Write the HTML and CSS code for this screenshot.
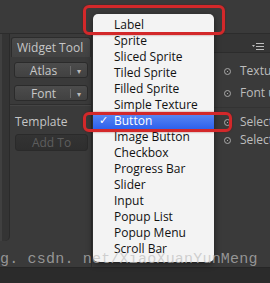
FILE: index.html
```html
<!DOCTYPE html>
<html lang="en">

<head>
    <meta charset="UTF-8">
    <title>Widget Tool</title>
    <link rel="stylesheet" href="styles.css">
</head>

<body>
    <div class="top"></div>

    <div class="main">
        <div class="gutter"></div>

        <div class="left">
            <div class="panel-title">Widget Tool</div>
            <div class="drop-btn">
                <span class="drop-label">Atlas</span>
                <span class="drop-arrow">&#9662;</span>
            </div>
            <div class="drop-btn">
                <span class="drop-label">Font</span>
                <span class="drop-arrow">&#9662;</span>
            </div>
            <div class="divider"></div>
            <div class="section-label">Template</div>
            <div class="btn-disabled">Add To</div>
        </div>

        <div class="middle"></div>

        <div class="right">
            <div class="right-head">
                <svg width="12" height="7" viewBox="0 0 12 7">
                    <path d="M0 2 L3 2 L1.5 4 Z" fill="#bdbdbd" />
                    <rect x="4" y="0" width="8" height="1" fill="#bdbdbd" />
                    <rect x="4" y="3" width="8" height="1" fill="#bdbdbd" />
                    <rect x="4" y="6" width="8" height="1" fill="#bdbdbd" />
                </svg>
            </div>
            <div class="row row-tall"><span class="dot"></span>Texture</div>
            <div class="row row-tall"><span class="dot"></span>Font u</div>
            <div class="right-divider"></div>
            <div class="row"><span class="dot"></span>Select</div>
            <div class="row"><span class="dot"></span>Select</div>
        </div>
    </div>

    <div class="bottom"></div>

    <!-- popup menu over the inspector -->
    <div class="menu">
        <div class="item">Label</div>
        <div class="item">Sprite</div>
        <div class="item">Sliced Sprite</div>
        <div class="item">Tiled Sprite</div>
        <div class="item">Filled Sprite</div>
        <div class="item">Simple Texture</div>
        <div class="item active"><span class="check">&#10003;</span>Button</div>
        <div class="item">Image Button</div>
        <div class="item">Checkbox</div>
        <div class="item">Progress Bar</div>
        <div class="item">Slider</div>
        <div class="item">Input</div>
        <div class="item">Popup List</div>
        <div class="item">Popup Menu</div>
        <div class="item">Scroll Bar</div>
    </div>

    <div class="mark mark-label"></div>
    <div class="mark mark-button"></div>

    <div class="watermark">g. csdn. net/XiaoXuanYunMeng</div>
</body>

</html>
```

FILE: styles.css
```css
body {
    margin: 0;
    width: 270px;
    height: 283px;
    position: relative;
    overflow: hidden;
    background-color: #3a3a3a;
    font-family: 'Open Sans', sans-serif;
    font-size: 12px;
}

.top {
    height: 33px;
}

.main {
    display: flex;
    height: 234px;
    border-top: 1px solid #2c2c2c;
    box-sizing: border-box;
}

.gutter {
    width: 9px;
    height: 207px;
    background-color: #343434;
    border-right: 1px solid #2a2a2a;
    border-bottom-right-radius: 5px;
    box-shadow: inset 2px 0 0 #404040;
}

.left {
    width: 81px;
    display: flex;
    flex-direction: column;
    border-right: 1px solid #2e2e2e;
}

.panel-title {
    margin: 3px 0 0 1px;
    height: 19px;
    line-height: 19px;
    padding-left: 5px;
    color: #c6c6c6;
    background: linear-gradient(#494949, #424242);
    border: 1px solid #2c2c2c;
    border-bottom: none;
    border-radius: 3px 3px 0 0;
}

.drop-btn {
    display: flex;
    align-items: center;
    margin: 5px 0 0 4px;
    width: 74px;
    height: 16px;
    box-sizing: border-box;
    border: 1px solid #2b2b2b;
    border-radius: 3px;
    background: linear-gradient(#4c4c4c, #414141);
    color: #c8c8c8;
}

.drop-btn + .drop-btn {
    margin-top: 7px;
}

.drop-label {
    flex: 1;
    height: 9px;
    display: flex;
    align-items: center;
    justify-content: center;
    padding-left: 2px;
    border-right: 1px solid #6a6a6a;
}

.drop-arrow {
    width: 16px;
    text-align: center;
    font-size: 8px;
    color: #bbbbbb;
}

.divider {
    margin-top: 3px;
    height: 1px;
    background-color: #2e2e2e;
    border-bottom: 1px solid #444444;
}

.section-label {
    margin-top: 6px;
    padding-left: 5px;
    height: 20px;
    line-height: 20px;
    color: #c6c6c6;
}

.btn-disabled {
    margin: 2px 0 0 5px;
    width: 71px;
    height: 15px;
    line-height: 15px;
    text-align: center;
    color: #5e5e5e;
    background: linear-gradient(#333333, #2e2e2e);
    border: 1px solid #2a2a2a;
    border-radius: 3px;
}

.middle {
    flex: 1;
}

.right {
    width: 56px;
    display: flex;
    flex-direction: column;
}

.right-head {
    height: 19px;
    display: flex;
    align-items: flex-end;
    justify-content: flex-end;
    padding: 0 6px 2px 0;
    box-sizing: border-box;
    background-color: #353535;
    border-bottom: 1px solid #2c2c2c;
}

.row {
    display: flex;
    align-items: center;
    height: 18px;
    color: #bdbdbd;
    white-space: nowrap;
    overflow: hidden;
}

.row-tall {
    height: 22px;
}

.right-head + .row {
    margin-top: 6px;
}

.dot {
    width: 7px;
    height: 7px;
    margin: 2px 9px 0 10px;
    border: 1px solid #a8a8a8;
    border-radius: 50%;
    box-sizing: border-box;
    display: flex;
    align-items: center;
    justify-content: center;
    flex-shrink: 0;
}

.dot::after {
    content: "";
    width: 1px;
    height: 1px;
    background-color: #a8a8a8;
}

.right-divider {
    margin: 4px 0 4px;
    height: 1px;
    background-color: #333333;
}

.bottom {
    height: 16px;
    background-color: #2b2b2b;
    border-top: 1px solid #262626;
}

.menu {
    position: absolute;
    left: 93px;
    top: 14px;
    width: 121px;
    height: 248px;
    padding-top: 3px;
    box-sizing: border-box;
    background-color: #f3f3f3;
    border-radius: 5px;
    box-shadow: 0 2px 6px rgba(0, 0, 0, 0.5);
}

.item {
    position: relative;
    height: 16px;
    line-height: 16px;
    padding-left: 21px;
    color: #111111;
}

.item.active {
    color: #ffffff;
    background: linear-gradient(#5d8af4, #2d61ec);
}

.check {
    position: absolute;
    left: 6px;
    font-family: 'DejaVu Sans', sans-serif;
    font-size: 11px;
}

.mark {
    position: absolute;
    border: 3px solid #d3282a;
    border-radius: 6px;
    box-shadow: 0 0 2px rgba(120, 0, 0, 0.6);
}

.mark-label {
    left: 83px;
    top: 5px;
    width: 136px;
    height: 24px;
}

.mark-button {
    left: 83px;
    top: 112px;
    width: 143px;
    height: 14px;
}

.watermark {
    position: absolute;
    left: 0;
    top: 251px;
    font-family: 'Liberation Mono', monospace;
    font-size: 15px;
    letter-spacing: 0.2px;
    color: rgba(190, 190, 190, 0.7);
    white-space: nowrap;
}
```
